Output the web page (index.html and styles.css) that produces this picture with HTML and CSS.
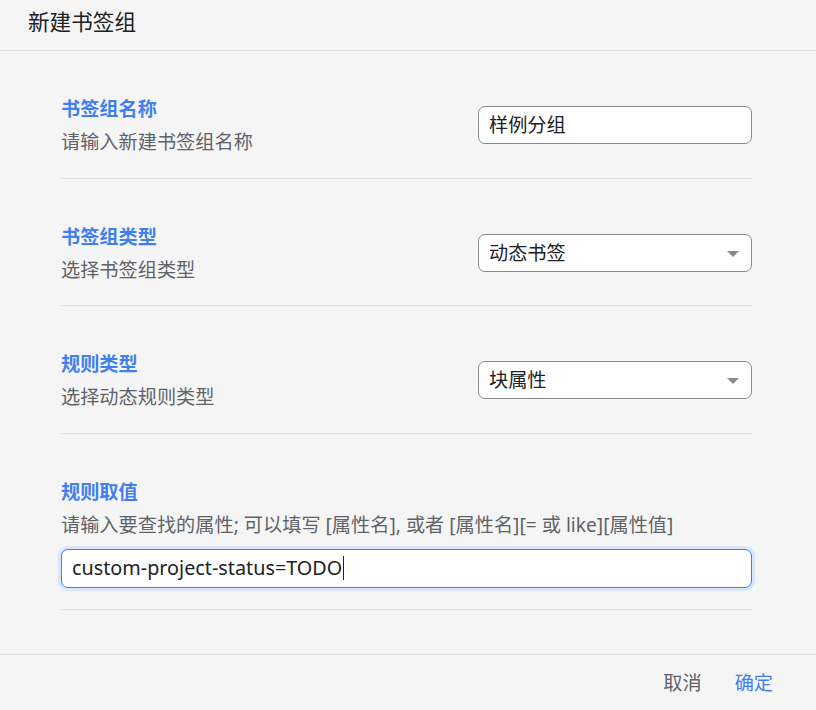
FILE: index.html
```html
<!DOCTYPE html>
<html lang="zh-CN">
<head>
<meta charset="utf-8">
<title>新建书签组</title>
<link rel="stylesheet" href="styles.css">
</head>
<body>
<div class="dialog">
  <div class="header">新建书签组</div>
  <div class="content">
    <div class="section row">
      <div class="text">
        <div class="label">书签组名称</div>
        <div class="desc">请输入新建书签组名称</div>
      </div>
      <div class="control">样例分组</div>
    </div>
    <div class="section row">
      <div class="text">
        <div class="label">书签组类型</div>
        <div class="desc">选择书签组类型</div>
      </div>
      <div class="control select">动态书签<span class="arrow"></span></div>
    </div>
    <div class="section row">
      <div class="text">
        <div class="label">规则类型</div>
        <div class="desc">选择动态规则类型</div>
      </div>
      <div class="control select">块属性<span class="arrow"></span></div>
    </div>
    <div class="section col last">
      <div class="text">
        <div class="label">规则取值</div>
        <div class="desc">请输入要查找的属性; 可以填写 [属性名], 或者 [属性名][= 或 like][属性值]</div>
      </div>
      <div class="control wide focus"><span class="val">custom-project-status=TODO</span><span class="caret"></span></div>
    </div>
  </div>
  <div class="footer">
    <span class="btn cancel">取消</span>
    <span class="btn ok">确定</span>
  </div>
</div>
</body>
</html>
```

FILE: styles.css
```css
* { box-sizing: border-box; }
html, body { margin: 0; padding: 0; }
body {
  background: #f5f5f5;
  font-family: "Noto Sans", "Noto Sans CJK SC", sans-serif;
  color: #202124;
  width: 816px;
  height: 710px;
  overflow: hidden;
}
.dialog { display: flex; flex-direction: column; height: 710px; }
.header {
  height: 51px;
  border-bottom: 1px solid #e0e0e0;
  padding: 7px 0 0 28px;
  font-size: 21.6px;
  line-height: 30px;
  color: #202124;
}
.content { padding: 0 64px 44px 61px; }
.section {
  border-bottom: 1px solid #e0e0e0;
  padding: 46px 0 23.6px;
}
.section.last { padding-bottom: 21.6px; }
.row { display: flex; align-items: center; justify-content: space-between; }
.col { display: flex; flex-direction: column; }
.label {
  font-size: 19.2px;
  line-height: 24px;
  font-weight: 700;
  color: #3f7ff0;
}
.desc {
  margin-top: 9px;
  font-size: 19.2px;
  line-height: 24px;
  color: #5f6368;
}
.control {
  position: relative;
  width: 274px;
  height: 38px;
  border: 1px solid #8a8a8a;
  border-radius: 7px;
  background: #fff;
  padding: 0 10px;
  font-size: 19.2px;
  line-height: 36px;
  color: #202124;
  margin-top: -1px;
}
.arrow {
  position: absolute;
  right: 12px;
  top: 16px;
  width: 0; height: 0;
  border-left: 6px solid transparent;
  border-right: 6px solid transparent;
  border-top: 6px solid #8a8a8a;
}
.wide {
  width: 100%;
  height: 39px;
  margin-top: 12px;
}
.focus {
  border-color: #3f7ff0;
  box-shadow: 0 0 0 3px #dbe5f8;
  display: flex;
  align-items: center;
}
.val { font-size: 19.8px; }
.caret {
  display: inline-block;
  width: 1px;
  height: 24px;
  background: #202124;
  margin-left: 1px;
}
.footer {
  flex: 1;
  border-top: 1px solid #e0e0e0;
  display: flex;
  justify-content: flex-end;
  align-items: center;
  gap: 33px;
  padding: 0 43px 0 0;
}
.btn { font-size: 19.2px; line-height: 24px; }
.cancel { color: #5f6368; }
.ok { color: #3f7ff0; }
```
